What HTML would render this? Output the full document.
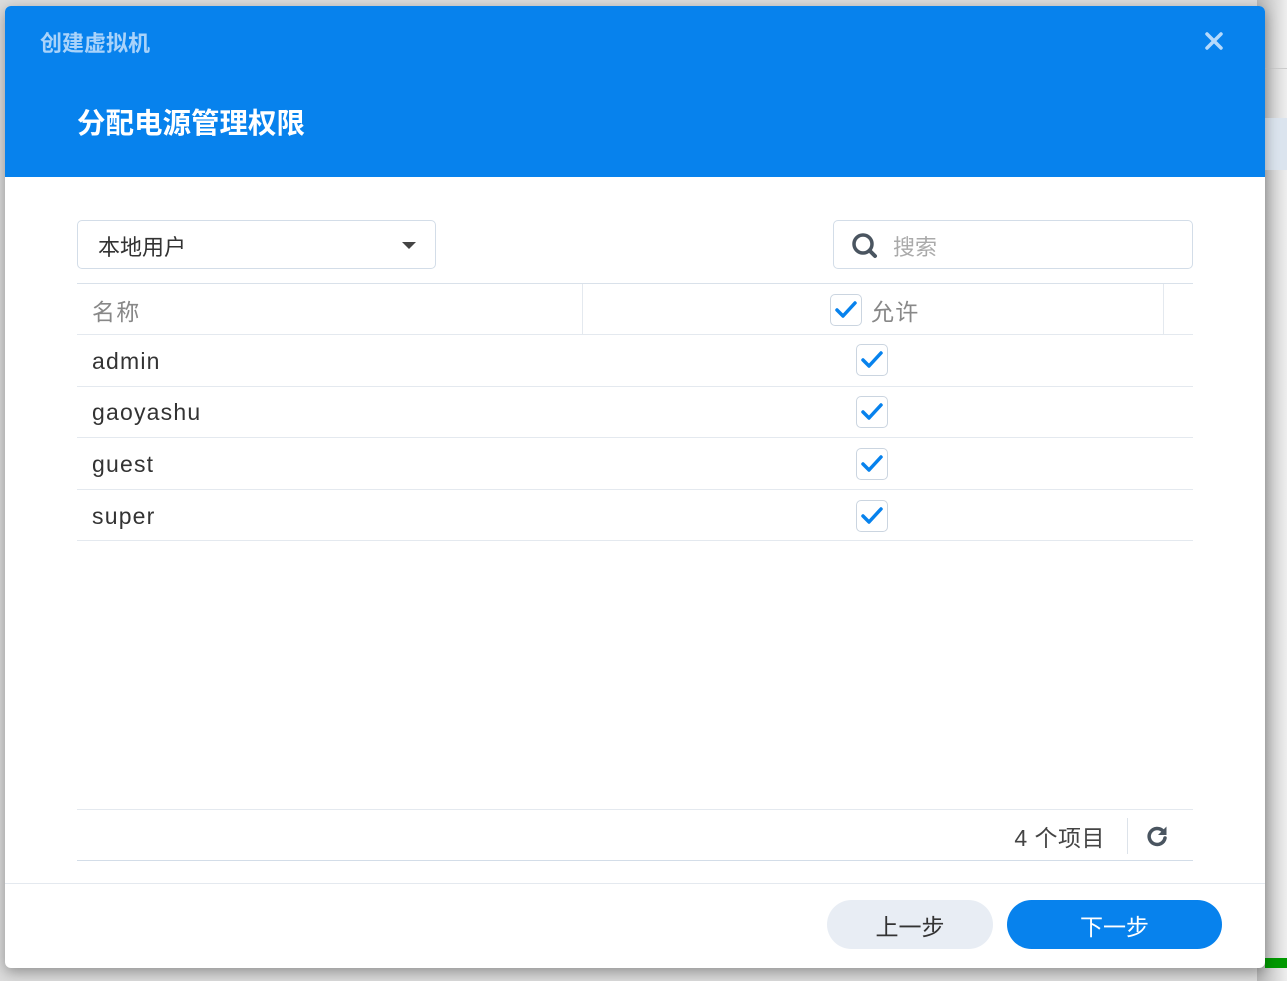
<!DOCTYPE html>
<html><head><meta charset="utf-8">
<style>
*{box-sizing:border-box;margin:0;padding:0}
body{width:1287px;height:981px;overflow:hidden;background:#dcdcdc;font-family:"Liberation Sans","Noto Sans CJK SC",sans-serif;position:relative}
.bgr{position:absolute;right:0;top:0;width:30px;height:981px;background:linear-gradient(90deg,#b8b8b8,#eee)}
.dlg{position:absolute;left:5px;top:6px;width:1260px;height:962px;background:#fff;border-radius:6px;overflow:hidden;box-shadow:0 4px 14px rgba(0,0,0,.35)}
.hd{height:171px;background:#0782ed;position:relative}
.t1{position:absolute;left:35px;top:20px;font-size:22px;font-weight:bold;color:#a9d3fa}
.t2{position:absolute;left:72px;top:95px;font-size:28.5px;font-weight:bold;color:#fff}
.x{position:absolute;left:1199px;top:25px}
.sel{position:absolute;left:72px;top:214px;width:359px;height:49px;border:1px solid #d3dde8;border-radius:5px;font-size:22px;color:#333;padding:9px 0 0 20px}
.sel:after{content:"";position:absolute;right:19px;top:21px;border:7px solid transparent;border-top:7px solid #444;border-bottom:0}
.srch{position:absolute;left:828px;top:214px;width:360px;height:49px;border:1px solid #d3dde8;border-radius:5px;font-size:22px;color:#aaa;padding:9px 0 0 59px}
.tbl{position:absolute;left:72px;top:277px;width:1116px}
.row{height:51.5px;border-bottom:1px solid #e4e9ef;position:relative;font-size:23px;color:#333;padding:13px 0 0 15px;letter-spacing:1.2px}
.thd{border-top:1px solid #d9e1ea;color:#888;height:52px;padding-top:9px}
.cb{position:absolute;width:32px;height:32px;border:1.5px solid #cbd5e0;border-radius:5px;background:#fff}
.cb svg{position:absolute;left:3px;top:4px}
.foot{position:absolute;left:72px;top:803px;width:1116px;height:52px;border-top:1px solid #e4e9ef;border-bottom:1px solid #d3dde8}
.cnt{position:absolute;right:88px;top:9px;font-size:23px;color:#444;letter-spacing:.5px}
.sep{position:absolute;right:65px;top:8px;width:1px;height:36px;background:#dde3ea}
.bar{position:absolute;left:0;top:877px;width:1260px;height:1px;background:#e4e9ef}
.btn{position:absolute;top:894px;height:49px;border-radius:25px;font-size:23px;text-align:center;padding-top:8px}
</style></head><body>
<div class="bgr"></div>
<div style="position:absolute;right:0;top:68px;width:22px;height:1px;background:#ccc"></div>
<div style="position:absolute;right:0;top:118px;width:22px;height:52px;background:#dbe4ee"></div>
<div style="position:absolute;right:0;top:958px;width:22px;height:10px;background:#009900"></div>
<div class="dlg">
 <div class="hd">
  <div class="t1">创建虚拟机</div>
  <div class="t2">分配电源管理权限</div>
  <svg class="x" width="20" height="20" viewBox="0 0 20 20"><path d="M3 3L17 17M17 3L3 17" stroke="#b5dafc" stroke-width="3.5" stroke-linecap="round"/></svg>
 </div>
 <div class="sel">本地用户</div>
 <div class="srch">搜索
  <svg style="position:absolute;left:17px;top:11px" width="28" height="28" viewBox="0 0 28 28"><circle cx="12" cy="12" r="9" fill="none" stroke="#4a5560" stroke-width="3.5"/><path d="M18.5 18.5L24 24" stroke="#4a5560" stroke-width="4" stroke-linecap="round"/></svg>
 </div>
 <div class="tbl">
  <div class="row thd">名称
   <div style="position:absolute;left:505px;top:0;width:1px;height:51px;background:#e4e9ef"></div>
   <div style="position:absolute;left:1086px;top:0;width:1px;height:51px;background:#e4e9ef"></div>
   <div class="cb" style="left:753px;top:10px"><svg width="24" height="22" viewBox="0 0 24 22"><path d="M3 11L9 17L21 4" fill="none" stroke="#0782ed" stroke-width="3.5" stroke-linecap="round" stroke-linejoin="round"/></svg></div>
   <span style="position:absolute;left:794px;top:9px;color:#888">允许</span>
  </div>
  <div class="row">admin<div class="cb" style="left:779px;top:9px"><svg width="24" height="22" viewBox="0 0 24 22"><path d="M3 11L9 17L21 4" fill="none" stroke="#0782ed" stroke-width="3.5" stroke-linecap="round" stroke-linejoin="round"/></svg></div></div>
  <div class="row" style="padding-top:12px">gaoyashu<div class="cb" style="left:779px;top:9px"><svg width="24" height="22" viewBox="0 0 24 22"><path d="M3 11L9 17L21 4" fill="none" stroke="#0782ed" stroke-width="3.5" stroke-linecap="round" stroke-linejoin="round"/></svg></div></div>
  <div class="row">guest<div class="cb" style="left:779px;top:10px"><svg width="24" height="22" viewBox="0 0 24 22"><path d="M3 11L9 17L21 4" fill="none" stroke="#0782ed" stroke-width="3.5" stroke-linecap="round" stroke-linejoin="round"/></svg></div></div>
  <div class="row">super<div class="cb" style="left:779px;top:10px"><svg width="24" height="22" viewBox="0 0 24 22"><path d="M3 11L9 17L21 4" fill="none" stroke="#0782ed" stroke-width="3.5" stroke-linecap="round" stroke-linejoin="round"/></svg></div></div>
 </div>
 <div class="foot">
  <div class="cnt">4 个项目</div>
  <div class="sep"></div>
  <svg style="position:absolute;right:24px;top:14px" width="24" height="24" viewBox="0 0 24 24"><path d="M18 7A8 8 0 1 0 20 14" fill="none" stroke="#4a5560" stroke-width="3.5" stroke-linecap="round"/><path d="M21.5 2.5L21.5 11L13 11Z" fill="#4a5560"/></svg>
 </div>
 <div class="bar"></div>
 <div class="btn" style="left:822px;width:166px;background:#e8edf4;color:#333">上一步</div>
 <div class="btn" style="left:1002px;width:215px;background:#0782ed;color:#fff">下一步</div>
</div>
</body></html>
